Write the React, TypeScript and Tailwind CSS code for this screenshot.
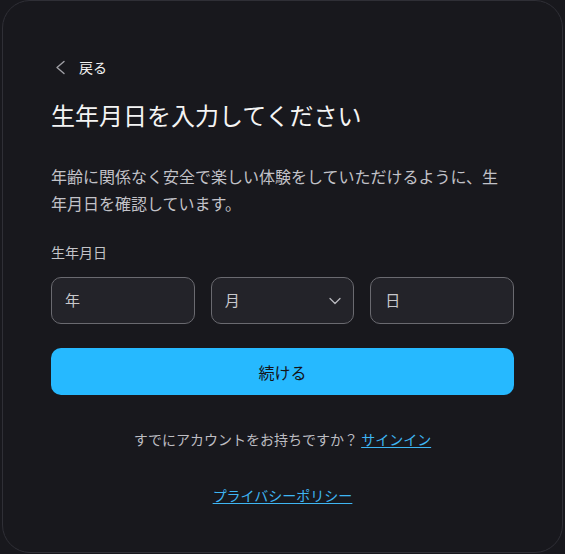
import React from "react";

export default function App() {
  const font = { fontFamily: '"Noto Sans CJK JP", "Noto Sans", sans-serif' };
  return (
    <div className="min-h-[554px] w-[565px] bg-[#18181d] pl-[2px]" style={font}>
      <div className="flex h-[553px] w-[561px] flex-col rounded-[28px] border border-[#2f2f36] bg-[#18181d] px-[48px] pt-[56px]">
        <div className="flex h-5 items-center">
          <svg width="16" height="16" viewBox="0 0 16 16" className="ml-[1px]">
            <polyline points="12,2.5 5,8.5 12,14.5" fill="none" stroke="#a0a0a6" strokeWidth="1.4" strokeLinecap="round" strokeLinejoin="round" />
          </svg>
          <span className="ml-[11px] text-[14px] leading-5 text-[#f2f2f2]">戻る</span>
        </div>
        <h1 className="mt-[22px] text-[24px] leading-8 text-[#f4f4f4]">生年月日を入力してください</h1>
        <p className="mt-[32px] text-[16px] leading-[27px] text-[#c2c2c8]">
          年齢に関係なく安全で楽しい体験をしていただけるように、生年月日を確認しています。
        </p>
        <div className="mt-[25px] text-[14px] leading-5 text-[#c4c4c8]">生年月日</div>
        <div className="mt-[15px] grid grid-cols-3 gap-4">
          <div className="flex h-[47px] items-center rounded-[10px] border border-[#6a6a70] bg-[#232329] pl-[13px] text-[15px] text-[#c8c8cc]">年</div>
          <div className="flex h-[47px] items-center justify-between rounded-[10px] border border-[#6a6a70] bg-[#232329] pl-[13px] pr-[12px] text-[15px] text-[#c8c8cc]">
            <span>月</span>
            <svg width="12" height="8" viewBox="0 0 12 8">
              <polyline points="1,1.5 6,6.5 11,1.5" fill="none" stroke="#b8b8be" strokeWidth="1.3" strokeLinecap="round" strokeLinejoin="round" />
            </svg>
          </div>
          <div className="flex h-[47px] items-center rounded-[10px] border border-[#6a6a70] bg-[#232329] pl-[14px] text-[15px] text-[#c8c8cc]">日</div>
        </div>
        <button className="mt-[24px] flex h-[47px] w-full items-center justify-center rounded-[10px] bg-[#26b9ff] text-[16px] text-[#141418]">
          続ける
        </button>
        <div className="mt-[34px] text-center text-[14px] leading-5 text-[#bdbdc2]">
          すでにアカウントをお持ちですか？ <span className="text-[#3fb5f2] underline underline-offset-2">サインイン</span>
        </div>
        <div className="mt-[36px] text-center text-[14px] leading-5">
          <span className="text-[#3fb5f2] underline underline-offset-2">プライバシーポリシー</span>
        </div>
      </div>
    </div>
  );
}
